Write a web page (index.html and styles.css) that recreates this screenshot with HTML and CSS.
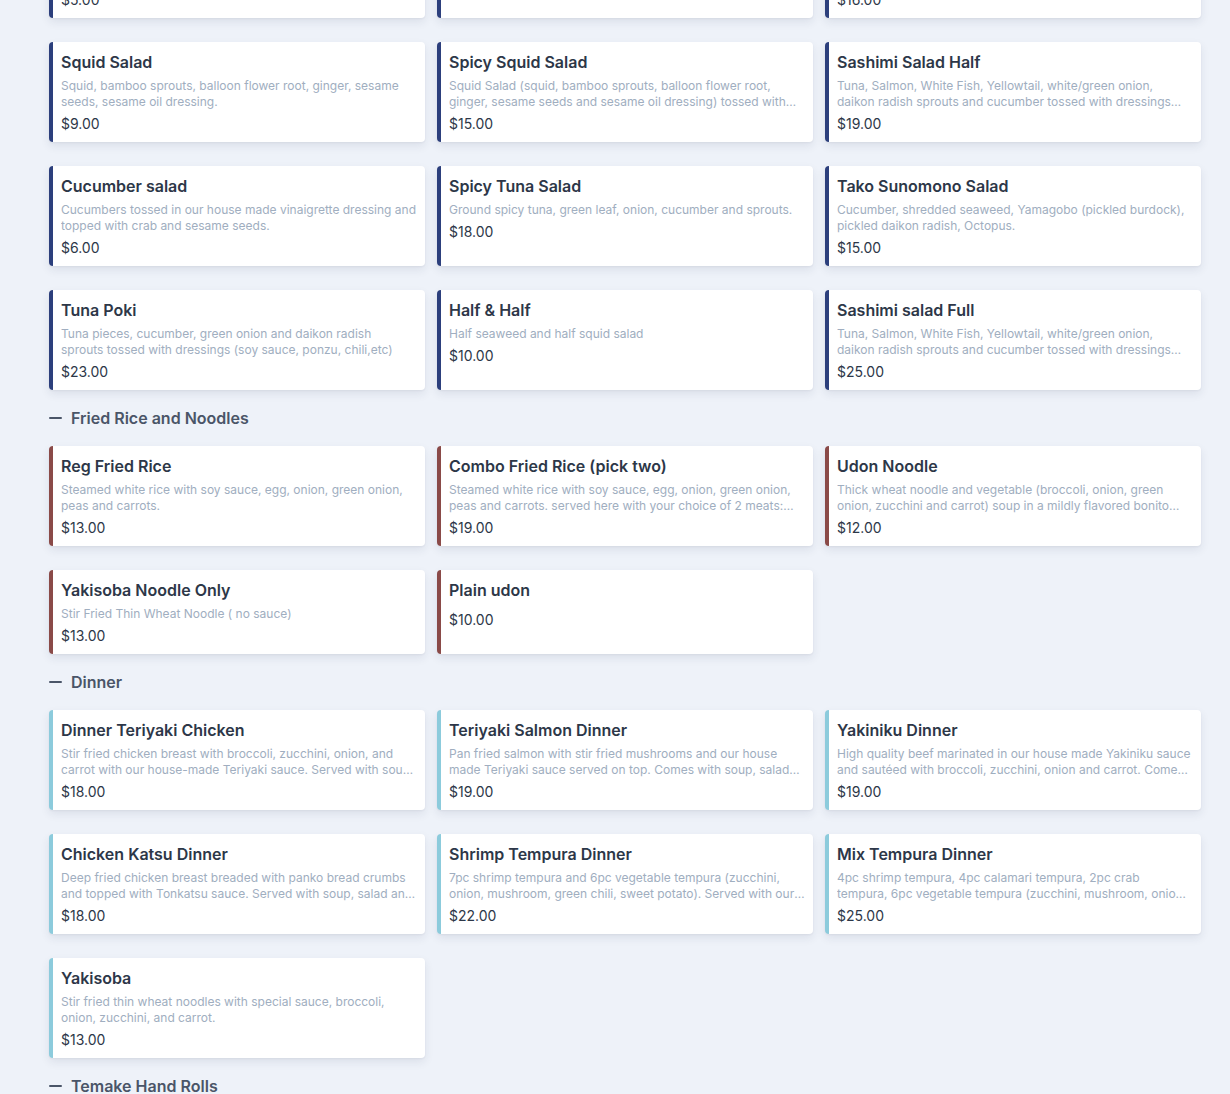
FILE: index.html
```html
<!DOCTYPE html>
<html lang="en">
<head>
<meta charset="utf-8">
<title>Menu</title>
<link rel="stylesheet" href="styles.css">
</head>
<body>
<main class="menu">
  <section class="section salads">
    <div class="grid">
      <article class="card"><h3 class="name">Seaweed Salad</h3><p class="desc">Seasoned seaweed with sesame seeds, cucumber and a light house made vinaigrette dressing.</p><div class="price">$5.00</div></article>
      <article class="card"><h3 class="name">House Salad</h3><p class="desc">Green leaf, cucumber and carrot with ginger dressing.</p><div class="price">$4.00</div></article>
      <article class="card"><h3 class="name">Salmon Skin Salad</h3><p class="desc">Crispy salmon skin, green leaf, cucumber, sprouts and bonito flakes with ponzu dressing.</p><div class="price">$16.00</div></article>

      <article class="card"><h3 class="name">Squid Salad</h3><p class="desc">Squid, bamboo sprouts, balloon flower root, ginger, sesame seeds, sesame oil dressing.</p><div class="price">$9.00</div></article>
      <article class="card"><h3 class="name">Spicy Squid Salad</h3><p class="desc">Squid Salad (squid, bamboo sprouts, balloon flower root, ginger, sesame seeds and sesame oil dressing) tossed with spicy sauce.</p><div class="price">$15.00</div></article>
      <article class="card"><h3 class="name">Sashimi Salad Half</h3><p class="desc">Tuna, Salmon, White Fish, Yellowtail, white/green onion, daikon radish sprouts and cucumber tossed with dressings (soy sauce, ponzu, chili, etc).</p><div class="price">$19.00</div></article>

      <article class="card"><h3 class="name">Cucumber salad</h3><p class="desc">Cucumbers tossed in our house made vinaigrette dressing and topped with crab and sesame seeds.</p><div class="price">$6.00</div></article>
      <article class="card"><h3 class="name">Spicy Tuna Salad</h3><p class="desc">Ground spicy tuna, green leaf, onion, cucumber and sprouts.</p><div class="price">$18.00</div></article>
      <article class="card"><h3 class="name">Tako Sunomono Salad</h3><p class="desc">Cucumber, shredded seaweed, Yamagobo (pickled burdock), pickled daikon radish, Octopus.</p><div class="price">$15.00</div></article>

      <article class="card"><h3 class="name">Tuna Poki</h3><p class="desc">Tuna pieces, cucumber, green onion and daikon radish sprouts tossed with dressings (soy sauce, ponzu, chili,etc)</p><div class="price">$23.00</div></article>
      <article class="card"><h3 class="name">Half &amp; Half</h3><p class="desc">Half seaweed and half squid salad</p><div class="price">$10.00</div></article>
      <article class="card"><h3 class="name">Sashimi salad Full</h3><p class="desc">Tuna, Salmon, White Fish, Yellowtail, white/green onion, daikon radish sprouts and cucumber tossed with dressings (soy sauce, ponzu, chili, etc).</p><div class="price">$25.00</div></article>
    </div>
  </section>

  <section class="section rice">
    <h2 class="section-title"><span class="dash"></span>Fried Rice and Noodles</h2>
    <div class="grid">
      <article class="card"><h3 class="name">Reg Fried Rice</h3><p class="desc">Steamed white rice with soy sauce, egg, onion, green onion, peas and carrots.</p><div class="price">$13.00</div></article>
      <article class="card"><h3 class="name">Combo Fried Rice (pick two)</h3><p class="desc">Steamed white rice with soy sauce, egg, onion, green onion, peas and carrots. served here with your choice of 2 meats: chicken, beef, shrimp.</p><div class="price">$19.00</div></article>
      <article class="card"><h3 class="name">Udon Noodle</h3><p class="desc">Thick wheat noodle and vegetable (broccoli, onion, green onion, zucchini and carrot) soup in a mildly flavored bonito broth.</p><div class="price">$12.00</div></article>

      <article class="card"><h3 class="name">Yakisoba Noodle Only</h3><p class="desc">Stir Fried Thin Wheat Noodle ( no sauce)</p><div class="price">$13.00</div></article>
      <article class="card"><h3 class="name">Plain udon</h3><p class="desc"></p><div class="price">$10.00</div></article>
    </div>
  </section>

  <section class="section dinner">
    <h2 class="section-title"><span class="dash"></span>Dinner</h2>
    <div class="grid">
      <article class="card"><h3 class="name">Dinner Teriyaki Chicken</h3><p class="desc">Stir fried chicken breast with broccoli, zucchini, onion, and carrot with our house-made Teriyaki sauce. Served with soup, salad and rice.</p><div class="price">$18.00</div></article>
      <article class="card"><h3 class="name">Teriyaki Salmon Dinner</h3><p class="desc">Pan fried salmon with stir fried mushrooms and our house made Teriyaki sauce served on top. Comes with soup, salad and rice.</p><div class="price">$19.00</div></article>
      <article class="card"><h3 class="name">Yakiniku Dinner</h3><p class="desc">High quality beef marinated in our house made Yakiniku sauce and sautéed with broccoli, zucchini, onion and carrot. Comes with soup, salad and rice.</p><div class="price">$19.00</div></article>

      <article class="card"><h3 class="name">Chicken Katsu Dinner</h3><p class="desc">Deep fried chicken breast breaded with panko bread crumbs and topped with Tonkatsu sauce. Served with soup, salad and rice.</p><div class="price">$18.00</div></article>
      <article class="card"><h3 class="name">Shrimp Tempura Dinner</h3><p class="desc">7pc shrimp tempura and 6pc vegetable tempura (zucchini, onion, mushroom, green chili, sweet potato). Served with our tempura sauce, soup, salad and rice.</p><div class="price">$22.00</div></article>
      <article class="card"><h3 class="name">Mix Tempura Dinner</h3><p class="desc">4pc shrimp tempura, 4pc calamari tempura, 2pc crab tempura, 6pc vegetable tempura (zucchini, mushroom, onion, green chili, sweet potato).</p><div class="price">$25.00</div></article>

      <article class="card"><h3 class="name">Yakisoba</h3><p class="desc">Stir fried thin wheat noodles with special sauce, broccoli, onion, zucchini, and carrot.</p><div class="price">$13.00</div></article>
    </div>
  </section>

  <section class="section rolls">
    <h2 class="section-title"><span class="dash"></span>Temake Hand Rolls</h2>
  </section>
</main>
</body>
</html>
```

FILE: styles.css
```css
html, body {
  margin: 0;
  padding: 0;
  background: #eef2f9;
  overflow: hidden;
}

body {
  font-family: Inter, "Noto Sans", "Liberation Sans", sans-serif;
  color: #2d3748;
}

.menu {
  width: 1152px;
  margin: -82px 0 0 49px;
  display: flex;
  flex-direction: column;
  gap: 16px;
}

.section-title {
  margin: 0 0 16px;
  height: 24px;
  display: flex;
  align-items: center;
  gap: 9px;
  font-size: 16px;
  font-weight: 600;
  color: #4a5568;
  line-height: 24px;
}

.dash {
  display: inline-block;
  width: 13px;
  height: 2px;
  background: #4a5568;
  border-radius: 1px;
}

.grid {
  display: grid;
  grid-template-columns: repeat(3, 1fr);
  column-gap: 12px;
  row-gap: 24px;
}

.card {
  background: #ffffff;
  border-left: 4px solid #2c3f7c;
  border-radius: 4px;
  padding: 10px 8px 8px;
  box-shadow: 0 4px 10px rgba(30, 45, 80, 0.09), 0 1px 2px rgba(30, 45, 80, 0.05);
  display: flex;
  flex-direction: column;
  min-width: 0;
}

.rice .card { border-left-color: #8a4a48; }
.dinner .card { border-left-color: #8ccbdc; }

.name {
  margin: 0 0 6px;
  font-size: 16px;
  line-height: 20px;
  font-weight: 600;
  color: #2d3748;
}

.desc {
  margin: 0 0 4px;
  font-size: 12px;
  line-height: 16px;
  color: #a0aec0;
  display: -webkit-box;
  -webkit-line-clamp: 2;
  -webkit-box-orient: vertical;
  overflow: hidden;
}

.price {
  font-size: 14px;
  line-height: 20px;
  color: #2d3748;
}
```
